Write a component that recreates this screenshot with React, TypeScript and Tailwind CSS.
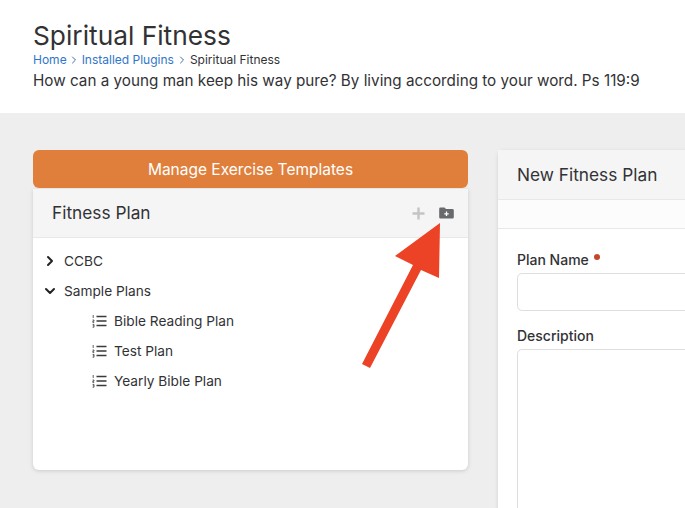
import { ChevronDown, ChevronRight } from "lucide-react";

const plans = ["Bible Reading Plan", "Test Plan", "Yearly Bible Plan"];

const ListIcon = () => (
  <svg width="15" height="14" viewBox="0 0 15 14" className="text-[#3a3a3c]">
    <path d="M4.5 2.5h10M4.5 7h10M4.5 11.5h10" stroke="currentColor" strokeWidth="1.5" fill="none" />
    <path d="M1.2 1v3M0.6 6h1.4v1.2h-1.2v1.2h1.4M0.6 10.4h1.4v2.8h-1.4M0.8 11.8h1.2" stroke="currentColor" strokeWidth="0.8" fill="none" />
  </svg>
);

const FolderPlus = () => (
  <svg width="15" height="12" viewBox="0 0 15 12">
    <path
      d="M1.5 0.5h4l1.5 1.6h6.5a1.3 1.3 0 0 1 1.3 1.3v6.8a1.3 1.3 0 0 1-1.3 1.3h-12a1.3 1.3 0 0 1-1.3-1.3v-8.4a1.3 1.3 0 0 1 1.3-1.3z"
      fill="#68696b"
    />
    <path d="M7.5 4.6v4.4M5.3 6.8h4.4" stroke="#fff" strokeWidth="1.3" />
  </svg>
);

const PlusIcon = () => (
  <svg width="13" height="13" viewBox="0 0 13 13">
    <path d="M6.5 0.5v12M0.5 6.5h12" stroke="#c4c4c4" strokeWidth="2.4" />
  </svg>
);

export default function App() {
  return (
    <div className="relative h-[508px] w-[685px] overflow-hidden bg-[#eeeeee] font-['Inter',sans-serif] text-[#323235]">
      <header className="h-[113px] bg-white px-[33px] pt-[19px]">
        <h1 className="text-[26.3px] leading-[33px]">Spiritual Fitness</h1>
        <nav className="flex h-[15px] items-center text-[12px] leading-[15px]">
          <span className="text-[#2f76c9]">Home</span>
          <ChevronRight size={12} strokeWidth={2} className="mx-[1.5px] text-[#3d6ea8]" />
          <span className="text-[#2f76c9]">Installed Plugins</span>
          <ChevronRight size={12} strokeWidth={2} className="mx-[2px] text-[#3d6ea8]" />
          <span>Spiritual Fitness</span>
        </nav>
        <p className="mt-[4px] text-[15.25px] leading-[20px] whitespace-nowrap">
          How can a young man keep his way pure? By living according to your word. Ps 119:9
        </p>
      </header>

      <main className="flex gap-[30px] pl-[33px] pt-[37px]">
        <section className="w-[435px] shrink-0">
          <button className="h-[38px] w-full rounded-[6px] bg-[#e07f3c] pt-px text-[15.5px] text-white">
            Manage Exercise Templates
          </button>
          <div className="mt-px h-[281px] rounded-b-[6px] bg-white shadow-[0_1px_4px_rgba(0,0,0,0.15)]">
            <div className="flex h-[49px] items-center justify-between border-b border-[#e8e8e8] bg-[#f5f5f5] pl-[19px] pr-[14px]">
              <h2 className="text-[17.3px]">Fitness Plan</h2>
              <div className="flex items-center gap-[14px]">
                <PlusIcon />
                <FolderPlus />
              </div>
            </div>
            <ul className="pt-[8px] text-[13.7px]">
              <li className="flex h-[30px] items-center pl-[9px]">
                <ChevronRight size={16} strokeWidth={3} className="mr-[6px] text-[#222]" />
                CCBC
              </li>
              <li className="flex h-[30px] items-center pl-[9px]">
                <ChevronDown size={16} strokeWidth={3} className="mr-[6px] text-[#222]" />
                Sample Plans
              </li>
              {plans.map((plan) => (
                <li key={plan} className="flex h-[30px] items-center gap-[7px] pl-[59px]">
                  <ListIcon />
                  {plan}
                </li>
              ))}
            </ul>
          </div>
        </section>

        <section className="h-[500px] w-[300px] shrink-0 rounded-t-[6px] bg-white shadow-[0_1px_4px_rgba(0,0,0,0.12)]">
          <div className="flex h-[50px] items-center border-b border-[#e8e8e8] bg-[#f5f5f5] px-[19px]">
            <h2 className="text-[17.3px]">New Fitness Plan</h2>
          </div>
          <div className="h-[29px] border-b border-[#e8e8e8] bg-[#fcfcfc]" />
          <div className="px-[19px] pt-[22px]">
            <label className="flex text-[14px] leading-[17px] font-medium">
              Plan Name
              <span className="ml-[5px] mt-[3px] h-[6px] w-[6px] rounded-full bg-[#c4472b]" />
            </label>
            <div className="mt-[5px] h-[38px] rounded-[5px] border border-[#dedede]" />
            <label className="mt-[16px] block text-[14px] leading-[17px] font-medium">Description</label>
            <div className="mt-[5px] h-[200px] rounded-[5px] border border-[#dedede]" />
          </div>
        </section>
      </main>

      {/* annotation arrow drawn over the screenshot */}
      <svg className="absolute left-0 top-0" width="685" height="508" viewBox="0 0 685 508">
        <polygon points="440,223 395,256 413,265 362,364 370,368 421,270 439,278" fill="#ec4225" />
      </svg>
    </div>
  );
}
